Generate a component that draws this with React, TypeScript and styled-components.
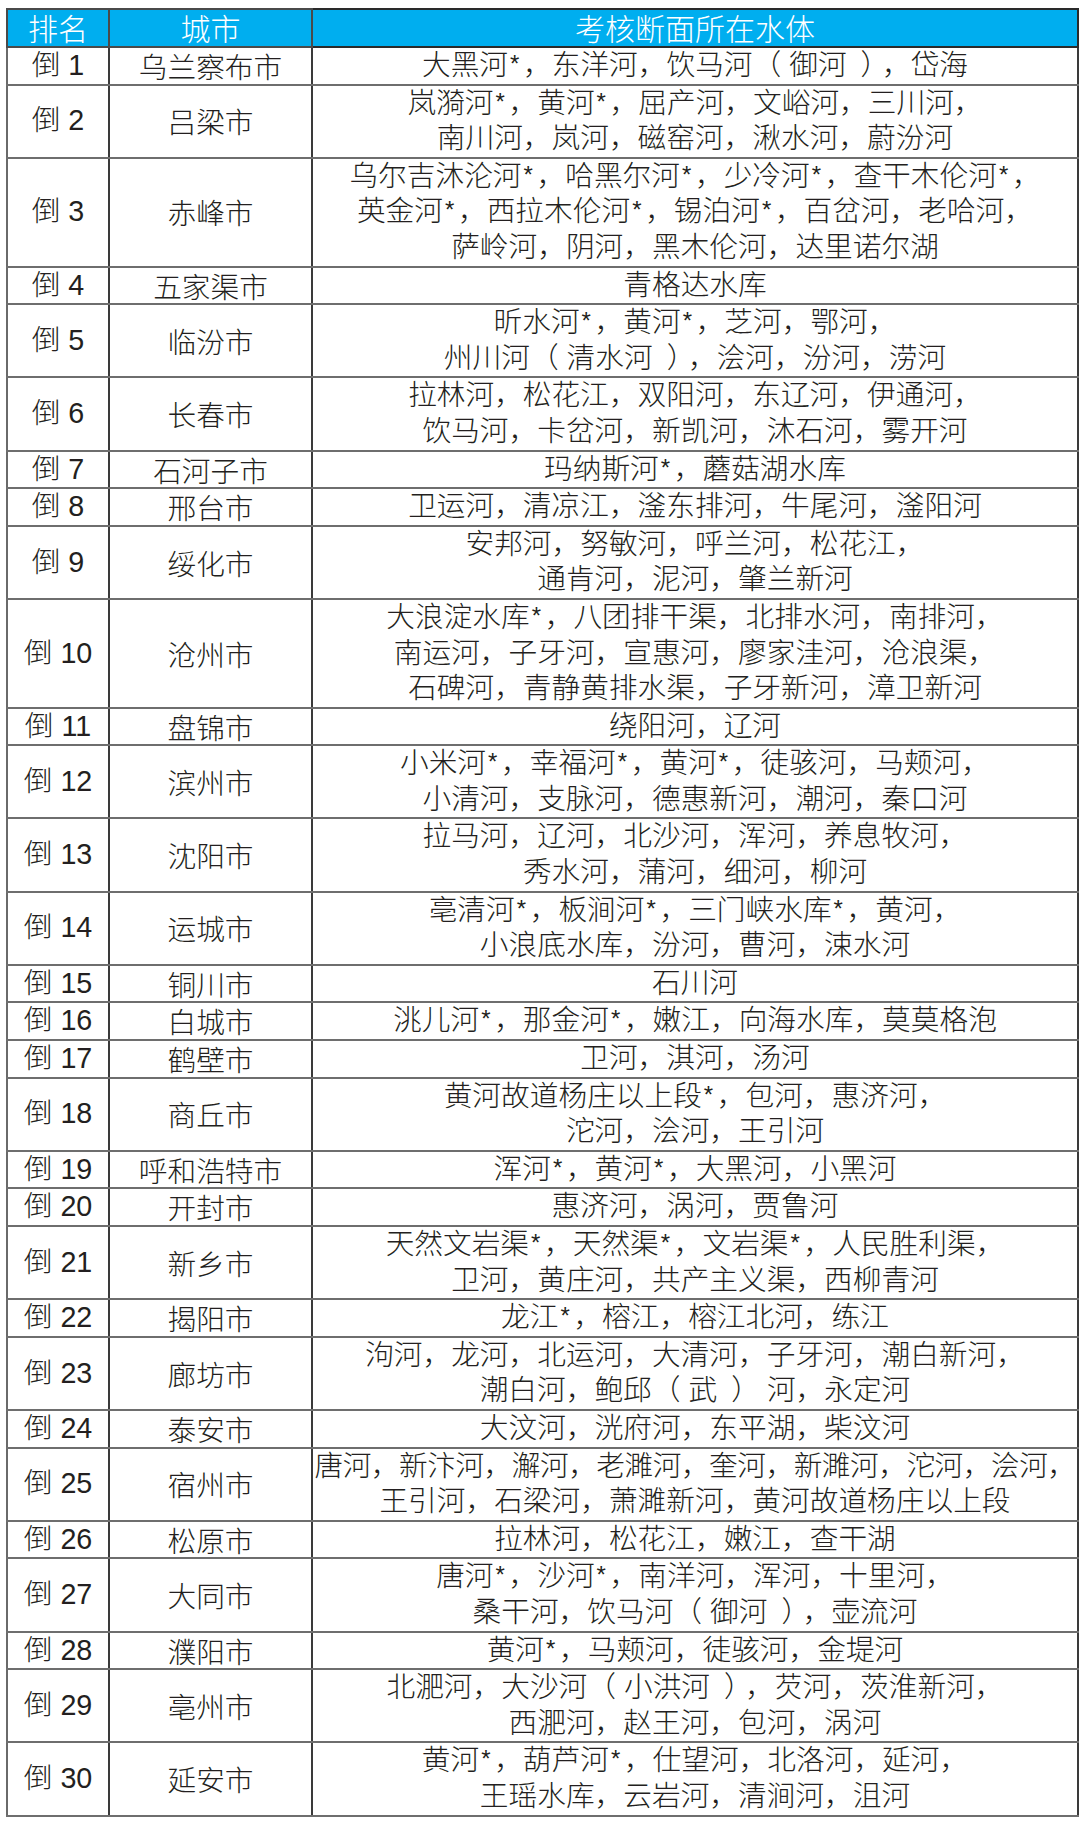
import React from "react";
import styled, { createGlobalStyle } from "styled-components";

const GlobalStyle = createGlobalStyle`
  html, body {
    margin: 0;
    padding: 0;
    background: #ffffff;
  }
  body {
    font-family: "Liberation Sans", "Noto Sans CJK SC", sans-serif;
    color: #231f20;
  }
`;

type Row = { rank: number; city: string; waters: string[] };

const rows: Row[] = [
  { rank: 1, city: "乌兰察布市", waters: ["大黑河*，东洋河，饮马河（御河），岱海"] },
  { rank: 2, city: "吕梁市", waters: ["岚漪河*，黄河*，屈产河，文峪河，三川河，", "南川河，岚河，磁窑河，湫水河，蔚汾河"] },
  {
    rank: 3,
    city: "赤峰市",
    waters: [
      "乌尔吉沐沦河*，哈黑尔河*，少冷河*，查干木伦河*，",
      "英金河*，西拉木伦河*，锡泊河*，百岔河，老哈河，",
      "萨岭河，阴河，黑木伦河，达里诺尔湖",
    ],
  },
  { rank: 4, city: "五家渠市", waters: ["青格达水库"] },
  { rank: 5, city: "临汾市", waters: ["昕水河*，黄河*，芝河，鄂河，", "州川河（清水河），浍河，汾河，涝河"] },
  { rank: 6, city: "长春市", waters: ["拉林河，松花江，双阳河，东辽河，伊通河，", "饮马河，卡岔河，新凯河，沐石河，雾开河"] },
  { rank: 7, city: "石河子市", waters: ["玛纳斯河*，蘑菇湖水库"] },
  { rank: 8, city: "邢台市", waters: ["卫运河，清凉江，滏东排河，牛尾河，滏阳河"] },
  { rank: 9, city: "绥化市", waters: ["安邦河，努敏河，呼兰河，松花江，", "通肯河，泥河，肇兰新河"] },
  {
    rank: 10,
    city: "沧州市",
    waters: [
      "大浪淀水库*，八团排干渠，北排水河，南排河，",
      "南运河，子牙河，宣惠河，廖家洼河，沧浪渠，",
      "石碑河，青静黄排水渠，子牙新河，漳卫新河",
    ],
  },
  { rank: 11, city: "盘锦市", waters: ["绕阳河，辽河"] },
  { rank: 12, city: "滨州市", waters: ["小米河*，幸福河*，黄河*，徒骇河，马颊河，", "小清河，支脉河，德惠新河，潮河，秦口河"] },
  { rank: 13, city: "沈阳市", waters: ["拉马河，辽河，北沙河，浑河，养息牧河，", "秀水河，蒲河，细河，柳河"] },
  { rank: 14, city: "运城市", waters: ["亳清河*，板涧河*，三门峡水库*，黄河，", "小浪底水库，汾河，曹河，涑水河"] },
  { rank: 15, city: "铜川市", waters: ["石川河"] },
  { rank: 16, city: "白城市", waters: ["洮儿河*，那金河*，嫩江，向海水库，莫莫格泡"] },
  { rank: 17, city: "鹤壁市", waters: ["卫河，淇河，汤河"] },
  { rank: 18, city: "商丘市", waters: ["黄河故道杨庄以上段*，包河，惠济河，", "沱河，浍河，王引河"] },
  { rank: 19, city: "呼和浩特市", waters: ["浑河*，黄河*，大黑河，小黑河"] },
  { rank: 20, city: "开封市", waters: ["惠济河，涡河，贾鲁河"] },
  { rank: 21, city: "新乡市", waters: ["天然文岩渠*，天然渠*，文岩渠*，人民胜利渠，", "卫河，黄庄河，共产主义渠，西柳青河"] },
  { rank: 22, city: "揭阳市", waters: ["龙江*，榕江，榕江北河，练江"] },
  { rank: 23, city: "廊坊市", waters: ["泃河，龙河，北运河，大清河，子牙河，潮白新河，", "潮白河，鲍邱（武）河，永定河"] },
  { rank: 24, city: "泰安市", waters: ["大汶河，洸府河，东平湖，柴汶河"] },
  {
    rank: 25,
    city: "宿州市",
    waters: ["唐河，新汴河，澥河，老濉河，奎河，新濉河，沱河，浍河，", "王引河，石梁河，萧濉新河，黄河故道杨庄以上段"],
  },
  { rank: 26, city: "松原市", waters: ["拉林河，松花江，嫩江，查干湖"] },
  { rank: 27, city: "大同市", waters: ["唐河*，沙河*，南洋河，浑河，十里河，", "桑干河，饮马河（御河），壶流河"] },
  { rank: 28, city: "濮阳市", waters: ["黄河*，马颊河，徒骇河，金堤河"] },
  { rank: 29, city: "亳州市", waters: ["北淝河，大沙河（小洪河），芡河，茨淮新河，", "西淝河，赵王河，包河，涡河"] },
  { rank: 30, city: "延安市", waters: ["黄河*，葫芦河*，仕望河，北洛河，延河，", "王瑶水库，云岩河，清涧河，沮河"] },
];

const Page = styled.div`
  padding: 8px 0 0 6px;
  width: 1080px;
  box-sizing: border-box;
`;

const Table = styled.table`
  width: 1065px;
  table-layout: fixed;
  border-collapse: collapse;
  border: 2px solid #3a3a3a;
`;

const HeadRow = styled.tr`
  background: #00aeef;
`;

const HeadCell = styled.th<{ $w: number; $dark?: boolean }>`
  width: ${(p) => p.$w}px;
  padding: 0;
  height: 36px;
  font-family: "Noto Sans CJK SC", sans-serif;
  font-weight: 300;
  font-size: 30px;
  line-height: 35.5px;
  color: #ffffff;
  text-align: center;
  border: 2px solid ${(p) => (p.$dark ? "#2a2a2a" : "#4a4a4a")};
`;

const BodyRow = styled.tr`
  background: #ffffff;
`;

const Cell = styled.td<{ $dark?: boolean }>`
  padding: 0;
  text-align: center;
  vertical-align: middle;
  font-size: 28.7px;
  font-weight: 300;
  line-height: 35.6px;
  color: #231f20;
  white-space: nowrap;
  border-top: 2px solid #6e6e6e;
  border-bottom: 2px solid #6e6e6e;
  border-left: 2px solid ${(p) => (p.$dark ? "#2a2a2a" : "#6a6a6a")};
  border-right: 2px solid #3a3a3a;
`;

const RankCell = styled(Cell)`
  font-family: "Liberation Sans", "Noto Sans CJK SC", sans-serif;
`;

const CityCell = styled(Cell)`
  font-family: "Noto Sans CJK SC", sans-serif;
`;

const WaterCell = styled(Cell)`
  font-family: "Liberation Sans", "Noto Sans CJK SC", sans-serif;
`;

const Line = styled.span<{ $tight?: boolean }>`
  display: block;
  letter-spacing: ${(p) => (p.$tight ? "-0.5px" : "0")};
`;

const Star = styled.span`
  display: inline-block;
  width: 15px;
  padding-left: 2px;
  box-sizing: border-box;
  text-align: left;
  font-family: "Liberation Sans", sans-serif;
  font-size: 24px;
  vertical-align: 3px;
  line-height: 1;
`;

const OpenParen = styled.span`
  margin-right: 8px;
`;

const CloseParen = styled.span`
  margin-left: 14px;
  margin-right: 7px;
`;

function renderLine(text: string) {
  return text.split(/(\*|（|）)/).map((part, i) => {
    if (part === "*") return <Star key={i}>*</Star>;
    if (part === "（") return <OpenParen key={i}>（</OpenParen>;
    if (part === "）") return <CloseParen key={i}>）</CloseParen>;
    return <React.Fragment key={i}>{part}</React.Fragment>;
  });
}

export default function App() {
  return (
    <Page>
      <GlobalStyle />
      <Table>
        <thead>
          <HeadRow>
            <HeadCell $w={100}>排名</HeadCell>
            <HeadCell $w={201}>城市</HeadCell>
            <HeadCell $w={764} $dark>
              考核断面所在水体
            </HeadCell>
          </HeadRow>
        </thead>
        <tbody>
          {rows.map((r) => (
            <BodyRow key={r.rank}>
              <RankCell>倒 {r.rank}</RankCell>
              <CityCell>{r.city}</CityCell>
              <WaterCell $dark>
                {r.waters.map((w, i) => (
                  <Line key={i} $tight={w.length > 26}>
                    {renderLine(w)}
                  </Line>
                ))}
              </WaterCell>
            </BodyRow>
          ))}
        </tbody>
      </Table>
    </Page>
  );
}
